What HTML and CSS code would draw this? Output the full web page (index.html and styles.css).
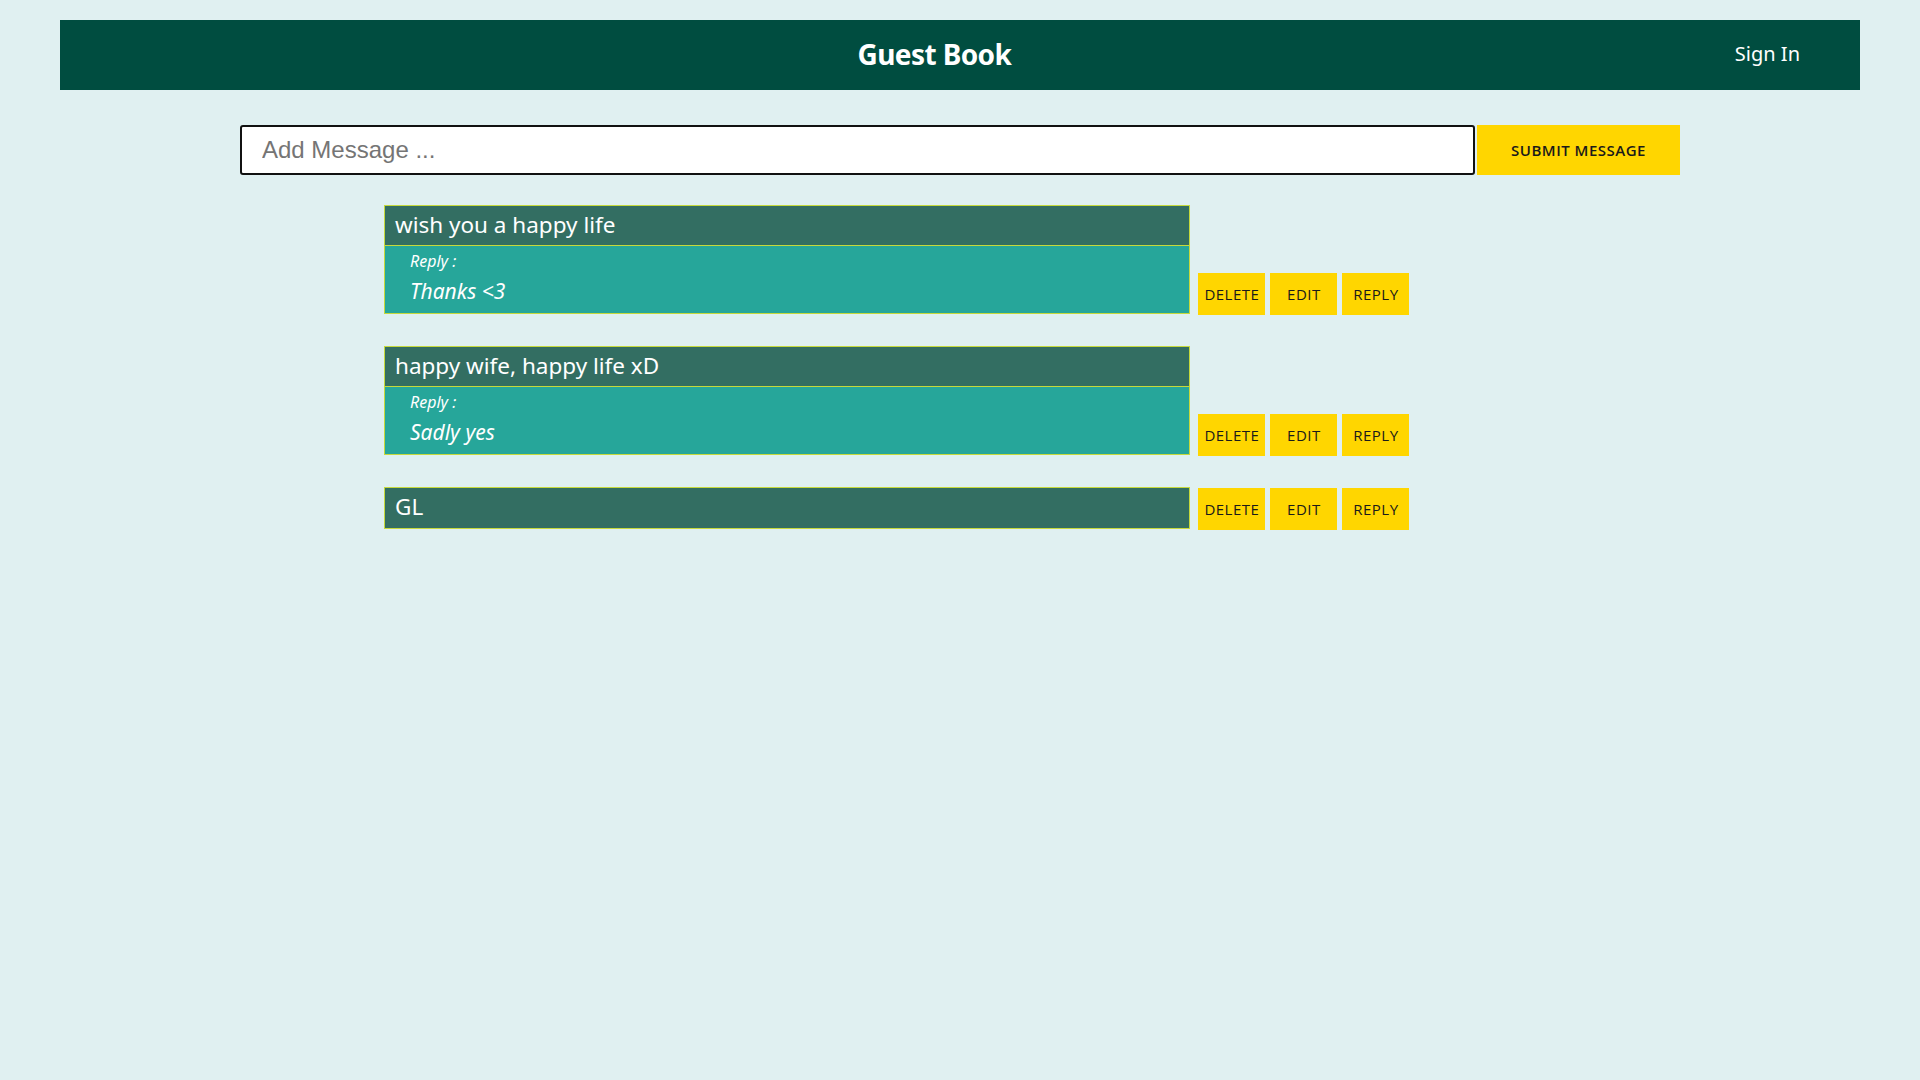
FILE: index.html
```html
<!DOCTYPE html>
<html lang="en">
<head>
<meta charset="utf-8">
<title>Guest Book</title>
<link rel="stylesheet" href="styles.css">
</head>
<body>
<header class="topbar">
  <h1 class="brand">Guest Book</h1>
  <a class="signin" href="#">Sign In</a>
</header>
<main>
  <form class="composer">
    <input class="composer-input" type="text" placeholder="Add Message ...">
    <button class="btn composer-submit" type="button">SUBMIT MESSAGE</button>
  </form>
  <section class="messages">
    <div class="row">
      <div class="card">
        <div class="card-title">wish you a happy life</div>
        <div class="card-reply">
          <div class="reply-label">Reply :</div>
          <div class="reply-text">Thanks &lt;3</div>
        </div>
      </div>
      <div class="actions">
        <button class="btn action" type="button">DELETE</button>
        <button class="btn action" type="button">EDIT</button>
        <button class="btn action" type="button">REPLY</button>
      </div>
    </div>
    <div class="row">
      <div class="card">
        <div class="card-title">happy wife, happy life xD</div>
        <div class="card-reply">
          <div class="reply-label">Reply :</div>
          <div class="reply-text">Sadly yes</div>
        </div>
      </div>
      <div class="actions">
        <button class="btn action" type="button">DELETE</button>
        <button class="btn action" type="button">EDIT</button>
        <button class="btn action" type="button">REPLY</button>
      </div>
    </div>
    <div class="row">
      <div class="card">
        <div class="card-title">GL</div>
      </div>
      <div class="actions">
        <button class="btn action" type="button">DELETE</button>
        <button class="btn action" type="button">EDIT</button>
        <button class="btn action" type="button">REPLY</button>
      </div>
    </div>
  </section>
</main>
</body>
</html>
```

FILE: styles.css
```css
* { box-sizing: border-box; }
html, body { margin: 0; padding: 0; }
body {
  background: #e0f0f1;
  font-family: "Noto Sans", "Open Sans", sans-serif;
  min-height: 1080px;
  padding-top: 20px;
}
.topbar {
  margin: 0 60px;
  height: 70px;
  background: #004d40;
  display: flex;
  align-items: center;
  padding: 0 60px 0 60px;
}
.brand {
  flex: 1;
  margin: 0 0 3px;
  text-align: center;
  color: #ffffff;
  font-size: 28px;
  font-weight: 700;
  letter-spacing: -0.6px;
  padding-left: 14px;
}
.signin {
  color: #ffffff;
  text-decoration: none;
  font-size: 20px;
  margin-bottom: 3px;
}
.composer {
  width: 75%;
  margin: 35px auto 0;
  display: flex;
}
.composer-input {
  flex: 1;
  height: 50px;
  border: 2px solid #111;
  border-radius: 3px;
  padding: 0 20px;
  font-family: "Liberation Sans", Arial, sans-serif;
  font-size: 24px;
  color: #333;
  background: #fff;
  outline: none;
}
.composer-input::placeholder { color: #757575; }
.btn {
  background: #ffd600;
  border: none;
  font-family: "Open Sans", sans-serif;
  color: #1a1a1a;
  cursor: pointer;
  letter-spacing: 0.5px;
}
.composer-submit {
  width: 203px;
  height: 50px;
  margin-left: 2px;
  font-size: 15px;
  font-weight: 600;
}
.messages {
  width: 60%;
  margin: 30px auto 0;
  display: flex;
  flex-direction: column;
  gap: 32px;
}
.row {
  display: flex;
  align-items: flex-end;
  gap: 8px;
}
.card {
  width: 70%;
  border: 1px solid #c6d93c;
  background: #26a69a;
}
.card-title {
  background: #336e62;
  color: #fff;
  height: 40px;
  padding: 0 10px;
  font-size: 22.5px;
  line-height: 38px;
  border-bottom: 1px solid #c6d93c;
}
.card > .card-title:only-child { border-bottom: none; height: 40px; }
.card-reply {
  padding: 4px 25px 4px;
  height: 67px;
  color: #fff;
  font-style: italic;
}
.reply-label { font-size: 16px; line-height: 22px; }
.reply-text { font-size: 21px; line-height: 38px; }
.actions {
  display: flex;
  gap: 5px;
}
.action {
  width: 67px;
  height: 42px;
  font-size: 15px;
  padding: 0;
  margin-bottom: -1px;
}
```
